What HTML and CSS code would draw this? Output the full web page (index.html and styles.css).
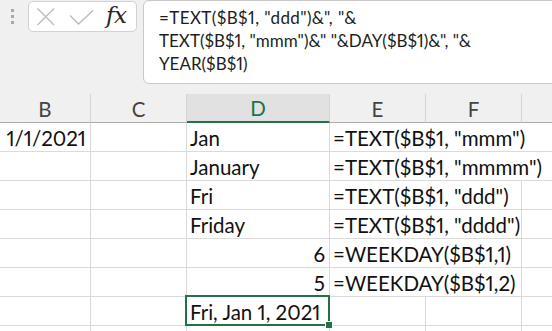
FILE: index.html
```html
<!DOCTYPE html>
<html>
<head>
<meta charset="utf-8">
<link rel="stylesheet" href="styles.css">
</head>
<body>
<div class="app">
  <div class="formula-row">
    <div class="grip"><i></i><i></i><i></i></div>
    <div class="fx-box">
      <svg class="fx-icons" width="72" height="29" viewBox="0 0 72 29">
        <path d="M8.5 6.5 L25 23 M25 6.5 L8.5 23" stroke="#bcbcbc" stroke-width="1.4" fill="none"/>
        <path d="M41 13.5 L49.5 22 L64 8.5" stroke="#bcbcbc" stroke-width="1.4" fill="none"/>
      </svg>
      <span class="fx">fx</span>
    </div>
    <div class="formula">
      <div class="fline">=TEXT($B$1, "ddd")&amp;", "&amp;</div>
      <div class="fline">TEXT($B$1, "mmm")&amp;" "&amp;DAY($B$1)&amp;", "&amp;</div>
      <div class="fline">YEAR($B$1)</div>
    </div>
  </div>
  <div class="sheet">
    <div class="hd">B</div>
    <div class="hd">C</div>
    <div class="hd sel">D</div>
    <div class="hd">E</div>
    <div class="hd">F</div>
    <div class="hd"></div>

    <div class="c num">1/1/2021</div>
    <div class="c"></div>
    <div class="c">Jan</div>
    <div class="c span3">=TEXT($B$1, "mmm")</div>

    <div class="c"></div>
    <div class="c"></div>
    <div class="c">January</div>
    <div class="c span3">=TEXT($B$1, "mmmm")</div>

    <div class="c"></div>
    <div class="c"></div>
    <div class="c">Fri</div>
    <div class="c span2">=TEXT($B$1, "ddd")</div>
    <div class="c"></div>

    <div class="c"></div>
    <div class="c"></div>
    <div class="c">Friday</div>
    <div class="c span2">=TEXT($B$1, "dddd")</div>
    <div class="c"></div>

    <div class="c"></div>
    <div class="c"></div>
    <div class="c num">6</div>
    <div class="c span2">=WEEKDAY($B$1,1)</div>
    <div class="c"></div>

    <div class="c"></div>
    <div class="c"></div>
    <div class="c num">5</div>
    <div class="c span2">=WEEKDAY($B$1,2)</div>
    <div class="c"></div>

    <div class="c"></div>
    <div class="c"></div>
    <div class="c active">Fri, Jan 1, 2021</div>
    <div class="c"></div>
    <div class="c"></div>
    <div class="c"></div>

    <div class="c"></div>
    <div class="c"></div>
    <div class="c"></div>
    <div class="c"></div>
    <div class="c"></div>
    <div class="c"></div>
  </div>
</div>
</body>
</html>
```

FILE: styles.css
```css
html, body {
  margin: 0;
  padding: 0;
}
body {
  background: #f0f0f0;
  font-family: Lato, "Open Sans", sans-serif;
  overflow: hidden;
}
.app {
  width: 552px;
  height: 331px;
  overflow: hidden;
  background: #f0f0f0;
}
.formula-row {
  display: flex;
  align-items: flex-start;
  height: 94px;
}
.grip {
  display: flex;
  flex-direction: column;
  gap: 3px;
  width: 3px;
  margin: 9px 14px 0 11px;
}
.grip i {
  display: block;
  width: 3px;
  height: 3px;
  background: #a8a8a8;
}
.fx-box {
  box-sizing: border-box;
  display: flex;
  align-items: center;
  width: 109px;
  height: 31px;
  margin-top: 1px;
  background: #fff;
  border: 1px solid #d2d2d2;
  border-radius: 5px;
  flex: none;
}
.fx-icons {
  display: block;
  flex: none;
}
.fx {
  font-family: "DejaVu Serif", "Liberation Serif", serif;
  font-style: italic;
  font-size: 23px;
  color: #262626;
  margin-left: 5px;
  margin-top: -2px;
  line-height: 1;
  letter-spacing: -0.5px;
}
.formula {
  box-sizing: border-box;
  flex: none;
  width: 430px;
  height: 84px;
  margin-left: 6px;
  padding: 5px 0 0 15px;
  background: #fff;
  border: 1px solid #c8c8c8;
  border-radius: 6px;
  color: #1e1e1e;
  font-size: 17px;
  line-height: 23px;
  white-space: nowrap;
  font-variant-numeric: proportional-nums;
}
.fline:first-child {
  letter-spacing: 0.4px;
}
.sheet {
  display: grid;
  grid-template-columns: 91px 96px 143px 96px 96px 31px;
  grid-auto-rows: 29px;
  font-size: 20.5px;
  color: #111;
  font-variant-numeric: proportional-nums;
}
.hd {
  box-sizing: border-box;
  display: flex;
  align-items: center;
  justify-content: center;
  border-right: 1px solid #d4d4d4;
  border-bottom: 1px solid #ababab;
  color: #444;
  padding-top: 1px;
}
.hd.sel {
  background: #e1e1e1;
  color: #217346;
  border-bottom: 2px solid #217346;
}
.c {
  box-sizing: border-box;
  display: flex;
  align-items: flex-end;
  padding: 0 4px 3px 3px;
  line-height: 20px;
  white-space: nowrap;
  background: #fff;
  border-right: 1px solid #dadada;
  border-bottom: 1px solid #dadada;
}
.c.num {
  justify-content: flex-end;
}
.c.span2 {
  grid-column: span 2;
}
.c.span3 {
  grid-column: span 3;
}
.c.active {
  position: relative;
  z-index: 1;
}
.c.active::after {
  content: "";
  position: absolute;
  left: -2px;
  top: -2px;
  right: -1px;
  bottom: -1px;
  border: 2px solid #217346;
}
.c.active::before {
  content: "";
  position: absolute;
  right: -4px;
  bottom: -4px;
  width: 6px;
  height: 6px;
  background: #217346;
  border: 1px solid #fff;
  z-index: 2;
}
```
